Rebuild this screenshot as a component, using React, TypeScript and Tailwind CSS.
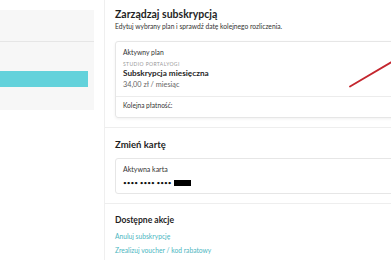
import React from "react";

export default function App() {
  return (
    <div
      className="relative flex w-[391px] h-[260px] overflow-hidden bg-white text-[#222]"
      style={{ fontFamily: "Lato, 'Open Sans', sans-serif" }}
    >
      {/* left sidebar */}
      <div className="w-[105px] shrink-0 border-r border-[#efefef] pt-[10px]">
        <div className="w-[94px] h-[100px] bg-[#f7f7f7]">
          <div className="h-[32px] border-b border-[#e6e6e6]" />
          <div className="mt-[29px] h-[16px] w-[88px] bg-[#63d2db]" />
        </div>
      </div>

      {/* main */}
      <div className="flex-1 min-w-0">
        <section className="border-b border-[#eeeeee] pl-[10px] pt-[8px] pb-[9px]">
          <h1 className="text-[10.5px] font-bold leading-[13px] text-[#1f1f1f] whitespace-nowrap">
            Zarządzaj subskrypcją
          </h1>
          <p className="mt-[1px] text-[6.7px] leading-[9px] text-[#333] whitespace-nowrap">
            Edytuj wybrany plan i sprawdź datę kolejnego rozliczenia.
          </p>
          <div className="mt-[10px] w-[300px] rounded-[3px] border border-[#e6e6e6] shadow-[0_1px_3px_rgba(0,0,0,0.06)]">
            <div className="px-[7px] pt-[6px] pb-[6px] border-b border-[#ececec]">
              <div className="text-[6.8px] leading-[9px] text-[#333]">Aktywny plan</div>
              <div className="mt-[4px] text-[5px] leading-[6px] text-[#999] uppercase tracking-[0.08em] whitespace-nowrap">
                Studio PortalYogi
              </div>
              <div className="mt-[1px] text-[8.2px] leading-[11px] font-bold text-[#1f1f1f] whitespace-nowrap">
                Subskrypcja miesięczna
              </div>
              <div className="mt-[1px] text-[7.3px] leading-[10px] text-[#666] whitespace-nowrap">
                34,00 zł / miesiąc
              </div>
            </div>
            <div className="px-[7px] pt-[4px] pb-[8px] text-[6.6px] leading-[8px] text-[#333]">
              Kolejna płatność:
            </div>
          </div>
        </section>

        <section className="border-b border-[#eeeeee] pl-[10px] pt-[11px] pb-[9px]">
          <h2 className="text-[9.5px] font-bold leading-[12px] text-[#1f1f1f]">Zmień kartę</h2>
          <div className="mt-[7px] w-[300px] h-[36px] rounded-[3px] border border-[#e6e6e6] px-[7px] pt-[6px]">
            <div className="text-[7px] leading-[9px] text-[#333]">Aktywna karta</div>
            <div className="mt-[4px] flex items-center">
              <span className="text-[6.5px] leading-[9px] text-[#111] whitespace-nowrap">•••• •••• ••••</span>
              <span className="ml-[2px] inline-block h-[6px] w-[17px] bg-black" />
            </div>
          </div>
        </section>

        <section className="pl-[10px] pt-[10px]">
          <h2 className="text-[8.6px] font-bold leading-[12px] text-[#1f1f1f]">Dostępne akcje</h2>
          <div className="mt-[6px] text-[6.7px] leading-[9px] text-[#4bb6bf]">Anuluj subskrypcję</div>
          <div className="mt-[5px] text-[6.7px] leading-[9px] text-[#4bb6bf] whitespace-nowrap">
            Zrealizuj voucher / kod rabatowy
          </div>
        </section>
      </div>

      {/* red annotation line */}
      <svg className="absolute left-0 top-0 pointer-events-none" width="391" height="260">
        <line x1="350" y1="86.5" x2="395" y2="60" stroke="#c4262e" strokeWidth="1.8" strokeLinecap="round" />
      </svg>
    </div>
  );
}
